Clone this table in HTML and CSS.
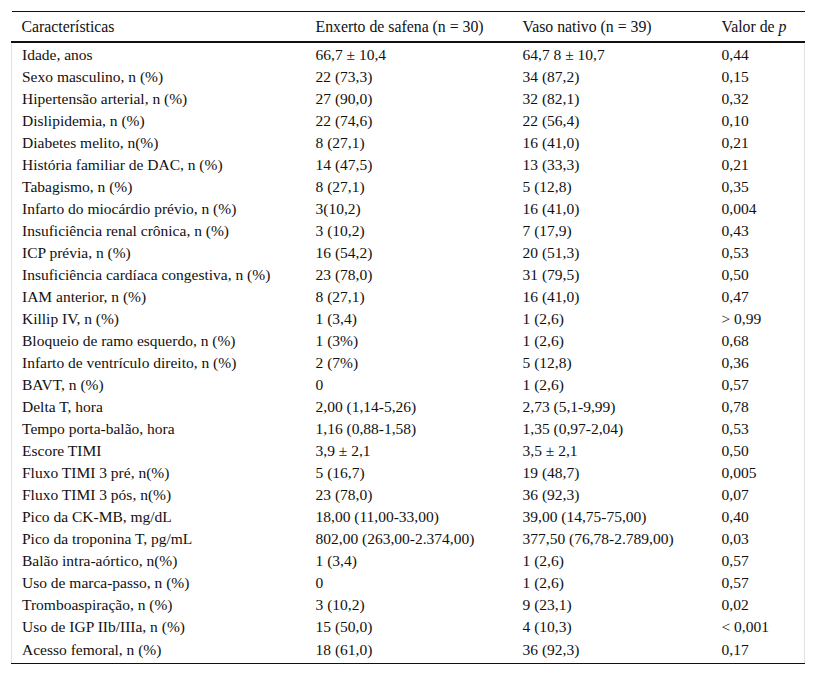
FILE: index.html
```html
<!DOCTYPE html>
<html lang="pt">
<head>
<meta charset="utf-8">
<link rel="stylesheet" href="styles.css">
</head>
<body>
<div class="wrap">
<table class="data">
<colgroup><col class="c1"><col class="c2"><col class="c3"><col class="c4"></colgroup>
<thead>
<tr><th>Características</th><th>Enxerto de safena (n = 30)</th><th>Vaso nativo (n = 39)</th><th>Valor de <i>p</i></th></tr>
</thead>
<tbody>
<tr><td>Idade, anos</td><td>66,7 ± 10,4</td><td>64,7 8 ± 10,7</td><td>0,44</td></tr>
<tr><td>Sexo masculino, n (%)</td><td>22 (73,3)</td><td>34 (87,2)</td><td>0,15</td></tr>
<tr><td>Hipertensão arterial, n (%)</td><td>27 (90,0)</td><td>32 (82,1)</td><td>0,32</td></tr>
<tr><td>Dislipidemia, n (%)</td><td>22 (74,6)</td><td>22 (56,4)</td><td>0,10</td></tr>
<tr><td>Diabetes melito, n(%)</td><td>8 (27,1)</td><td>16 (41,0)</td><td>0,21</td></tr>
<tr><td>História familiar de DAC, n (%)</td><td>14 (47,5)</td><td>13 (33,3)</td><td>0,21</td></tr>
<tr><td>Tabagismo, n (%)</td><td>8 (27,1)</td><td>5 (12,8)</td><td>0,35</td></tr>
<tr><td>Infarto do miocárdio prévio, n (%)</td><td>3(10,2)</td><td>16 (41,0)</td><td>0,004</td></tr>
<tr><td>Insuficiência renal crônica, n (%)</td><td>3 (10,2)</td><td>7 (17,9)</td><td>0,43</td></tr>
<tr><td>ICP prévia, n (%)</td><td>16 (54,2)</td><td>20 (51,3)</td><td>0,53</td></tr>
<tr><td>Insuficiência cardíaca congestiva, n (%)</td><td>23 (78,0)</td><td>31 (79,5)</td><td>0,50</td></tr>
<tr><td>IAM anterior, n (%)</td><td>8 (27,1)</td><td>16 (41,0)</td><td>0,47</td></tr>
<tr><td>Killip IV, n (%)</td><td>1 (3,4)</td><td>1 (2,6)</td><td>&gt; 0,99</td></tr>
<tr><td>Bloqueio de ramo esquerdo, n (%)</td><td>1 (3%)</td><td>1 (2,6)</td><td>0,68</td></tr>
<tr><td>Infarto de ventrículo direito, n (%)</td><td>2 (7%)</td><td>5 (12,8)</td><td>0,36</td></tr>
<tr><td>BAVT, n (%)</td><td>0</td><td>1 (2,6)</td><td>0,57</td></tr>
<tr><td>Delta T, hora</td><td>2,00 (1,14-5,26)</td><td>2,73 (5,1-9,99)</td><td>0,78</td></tr>
<tr><td>Tempo porta-balão, hora</td><td>1,16 (0,88-1,58)</td><td>1,35 (0,97-2,04)</td><td>0,53</td></tr>
<tr><td>Escore TIMI</td><td>3,9 ± 2,1</td><td>3,5 ± 2,1</td><td>0,50</td></tr>
<tr><td>Fluxo TIMI 3 pré, n(%)</td><td>5 (16,7)</td><td>19 (48,7)</td><td>0,005</td></tr>
<tr><td>Fluxo TIMI 3 pós, n(%)</td><td>23 (78,0)</td><td>36 (92,3)</td><td>0,07</td></tr>
<tr><td>Pico da CK-MB, mg/dL</td><td>18,00 (11,00-33,00)</td><td>39,00 (14,75-75,00)</td><td>0,40</td></tr>
<tr><td>Pico da troponina T, pg/mL</td><td>802,00 (263,00-2.374,00)</td><td>377,50 (76,78-2.789,00)</td><td>0,03</td></tr>
<tr><td>Balão intra-aórtico, n(%)</td><td>1 (3,4)</td><td>1 (2,6)</td><td>0,57</td></tr>
<tr><td>Uso de marca-passo, n (%)</td><td>0</td><td>1 (2,6)</td><td>0,57</td></tr>
<tr><td>Tromboaspiração, n (%)</td><td>3 (10,2)</td><td>9 (23,1)</td><td>0,02</td></tr>
<tr><td>Uso de IGP IIb/IIIa, n (%)</td><td>15 (50,0)</td><td>4 (10,3)</td><td>&lt; 0,001</td></tr>
<tr><td>Acesso femoral, n (%)</td><td>18 (61,0)</td><td>36 (92,3)</td><td>0,17</td></tr>
</tbody>
</table>
</div>
</body>
</html>
```

FILE: styles.css
```css
html, body {
  margin: 0;
  padding: 0;
  background: #fff;
}
.wrap {
  padding: 11px 11px 0 11px;
}
.data {
  width: 793px;
  border-collapse: collapse;
  table-layout: fixed;
  font-family: "Liberation Serif", "Times New Roman", Tinos, "DejaVu Serif", serif;
  font-size: 15.5px;
  line-height: 17px;
  color: #111;
}
.c1 { width: 294px; }
.c2 { width: 207px; }
.c3 { width: 199px; }
.c4 { width: 93px; }
.data th {
  text-align: left;
  font-weight: normal;
  font-size: 15.8px;
  height: 29px;
  padding: 0 0 0 10px;
  border-top: 1px solid #111;
  border-bottom: 2px solid #111;
  vertical-align: middle;
}
.data th i {
  font-style: italic;
}
.data td {
  height: 22px;
  padding: 0 0 0 10px;
  vertical-align: middle;
  white-space: nowrap;
}
.data tbody tr td:first-child {
  border-left: 1px solid #e2e2e2;
}
.data tbody tr td:last-child {
  border-right: 1px solid #e2e2e2;
}
.data tbody tr:last-child td {
  height: 24px;
  padding-bottom: 2px;
  border-bottom: 1px solid #111;
}
```
